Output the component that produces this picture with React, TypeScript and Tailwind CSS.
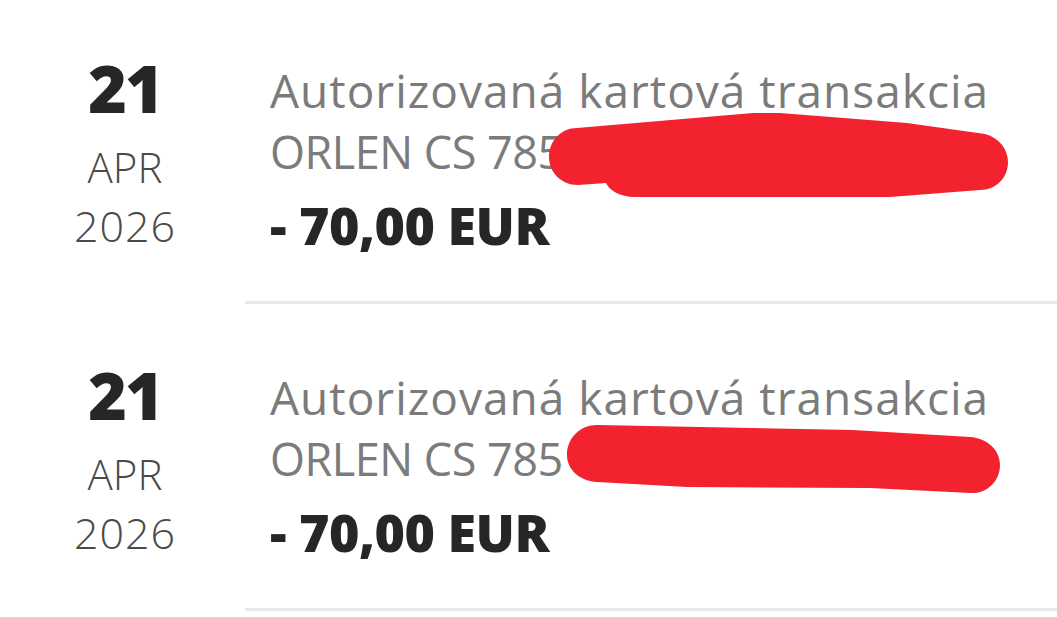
import React from "react"

const transactions = [
  { day: "21", month: "APR", year: "2026", title: "Autorizovaná kartová transakcia", merchant: "ORLEN CS 785", amount: "- 70,00 EUR" },
  { day: "21", month: "APR", year: "2026", title: "Autorizovaná kartová transakcia", merchant: "ORLEN CS 785", amount: "- 70,00 EUR" },
]

function TransactionRow({ tx }: { tx: (typeof transactions)[number] }) {
  return (
    <div className="flex">
      {/* Date */}
      <div className="w-[245px] shrink-0 pl-[5px] pt-[55px] text-center">
        <p className="text-[66px] leading-[70px] font-extrabold tracking-[-2px] text-[#262626]">{tx.day}</p>
        <p className="mt-[17px] text-[42px] leading-[56px] font-light text-[#4a4a4a]">{tx.month}</p>
        <p className="mt-[3px] text-[43px] leading-[56px] font-light tracking-[1px] text-[#4a4a4a]">{tx.year}</p>
      </div>

      {/* Details */}
      <div className="flex-1 pl-[25px] pt-[62px] pb-[41px] border-b-[3px] border-[#e8e8e8]">
        <p className="text-[46px] leading-[62px] tracking-[1px] text-[#7b7b7b] whitespace-nowrap">{tx.title}</p>
        <p className="text-[45px] leading-[62px] tracking-[-0.5px] text-[#7b7b7b] whitespace-nowrap">{tx.merchant}</p>
        <p className="mt-[7px] text-[52px] leading-[70px] font-extrabold tracking-[-0.5px] text-[#262626] whitespace-nowrap">{tx.amount}</p>
      </div>
    </div>
  )
}

export default function App() {
  return (
    <div
      className="relative w-[1057px] h-[617px] overflow-hidden bg-white"
      style={{ fontFamily: '"Open Sans", "Liberation Sans", sans-serif' }}
    >
      <div className="-mt-[3px]">
        {transactions.map((tx, i) => (
          <TransactionRow key={i} tx={tx} />
        ))}
      </div>

      {/* Red marker redactions */}
      <svg className="absolute inset-0 pointer-events-none" width="1057" height="617" viewBox="0 0 1057 617">
        <path
          fill="#f2222f"
          d="M549,157 C549,141 561,128 577,128 L753,113 L780,113 L907,123 L985,134 C1000,138 1008,150 1008,162 C1008,178 996,190 980,190 L890,197 L635,197 C620,197 609,190 606,183 L578,185 C561,185 549,172 549,157 Z"
        />
        <path
          fill="#f2222f"
          d="M567,455 C567,438 580,425 597,425 L853,430 L970,437 C987,438 1000,450 1000,465 C1000,481 987,494 971,493 L870,488 L687,487 L597,482 C580,481 567,470 567,455 Z"
        />
      </svg>
    </div>
  )
}
